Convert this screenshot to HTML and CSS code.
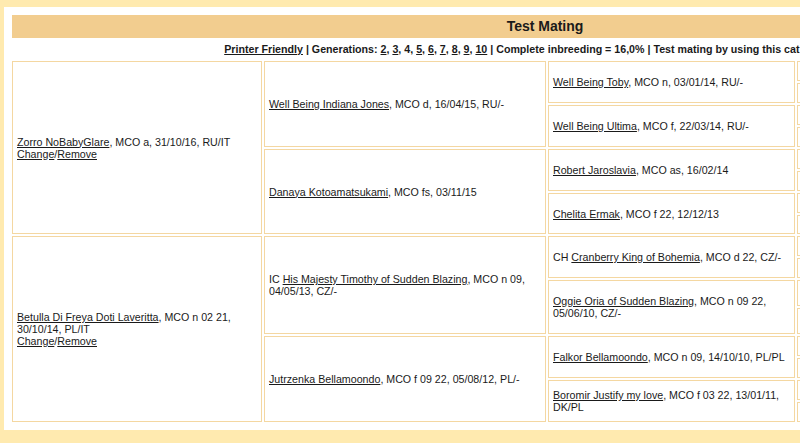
FILE: index.html
```html
<!DOCTYPE html>
<html lang="en">

<head>
  <meta charset="UTF-8" />
  <title>Test Mating</title>
  <link rel="stylesheet" href="styles.css">
</head>

<body>
  <div class="page">
    <h1 class="title-bar">Test Mating</h1>

    <div class="links">
      <a href="#">Printer Friendly</a> | Generations: <a href="#">2</a>, <a href="#">3</a>, 4, <a href="#">5</a>,
      <a href="#">6</a>, <a href="#">7</a>, <a href="#">8</a>, <a href="#">9</a>, <a href="#">10</a>
      | Complete inbreeding = 16,0% | Test mating by using this cat as the father
    </div>

    <table class="pedigree">
      <colgroup>
        <col class="gen1">
        <col class="gen2">
        <col class="gen3">
        <col class="gen4">
      </colgroup>
      <tr>
        <td rowspan="8"><a href="#">Zorro NoBabyGlare</a>, MCO a, 31/10/16, RU/IT<br><a href="#">Change</a>/<a href="#">Remove</a></td>
        <td rowspan="4"><a href="#">Well Being Indiana Jones</a>, MCO d, 16/04/15, RU/-</td>
        <td rowspan="2"><a href="#">Well Being Toby</a>, MCO n, 03/01/14, RU/-</td>
        <td class="g4"><div class="slot"></div></td>
      </tr>
      <tr><td class="g4"><div class="slot"></div></td></tr>
      <tr>
        <td rowspan="2"><a href="#">Well Being Ultima</a>, MCO f, 22/03/14, RU/-</td>
        <td class="g4"><div class="slot"></div></td>
      </tr>
      <tr><td class="g4"><div class="slot"></div></td></tr>
      <tr>
        <td rowspan="4"><a href="#">Danaya Kotoamatsukami</a>, MCO fs, 03/11/15</td>
        <td rowspan="2"><a href="#">Robert Jaroslavia</a>, MCO as, 16/02/14</td>
        <td class="g4"><div class="slot"></div></td>
      </tr>
      <tr><td class="g4"><div class="slot"></div></td></tr>
      <tr>
        <td rowspan="2"><a href="#">Chelita Ermak</a>, MCO f 22, 12/12/13</td>
        <td class="g4"><div class="slot"></div></td>
      </tr>
      <tr><td class="g4"><div class="slot short"></div></td></tr>

      <tr>
        <td rowspan="8"><a href="#">Betulla Di Freya Doti Laveritta</a>, MCO n 02 21, 30/10/14, PL/IT<br><a href="#">Change</a>/<a href="#">Remove</a></td>
        <td rowspan="4">IC <a href="#">His Majesty Timothy of Sudden Blazing</a>, MCO n 09, 04/05/13, CZ/-</td>
        <td rowspan="2">CH <a href="#">Cranberry King of Bohemia</a>, MCO d 22, CZ/-</td>
        <td class="g4"><div class="slot"></div></td>
      </tr>
      <tr><td class="g4"><div class="slot"></div></td></tr>
      <tr>
        <td rowspan="2"><a href="#">Oggie Oria of Sudden Blazing</a>, MCO n 09 22, 05/06/10, CZ/-</td>
        <td class="g4"><div class="slot tall"></div></td>
      </tr>
      <tr><td class="g4"><div class="slot tall"></div></td></tr>
      <tr>
        <td rowspan="4"><a href="#">Jutrzenka Bellamoondo</a>, MCO f 09 22, 05/08/12, PL/-</td>
        <td rowspan="2"><a href="#">Falkor Bellamoondo</a>, MCO n 09, 14/10/10, PL/PL</td>
        <td class="g4"><div class="slot"></div></td>
      </tr>
      <tr><td class="g4"><div class="slot"></div></td></tr>
      <tr>
        <td rowspan="2"><a href="#">Boromir Justify my love</a>, MCO f 03 22, 13/01/11, DK/PL</td>
        <td class="g4"><div class="slot"></div></td>
      </tr>
      <tr><td class="g4"><div class="slot"></div></td></tr>
    </table>
  </div>
</body>

</html>
```

FILE: styles.css
```css
:root {
  --page-bg: #ffeaaf;
  --bar: #f2cd8f;
  --line: #f4d7a1;
  --ink: #1a1a1a;
}

* {
  box-sizing: border-box;
}

html,
body {
  margin: 0;
  padding: 0;
  overflow: hidden;
}

body {
  background: var(--page-bg);
  color: var(--ink);
  font-family: Arial, 'Liberation Sans', sans-serif;
  font-size: 8pt;
  padding: 7px 0 0 4px;
}

a {
  color: var(--ink);
  text-decoration: underline;
}

.page {
  background: white;
  width: 1082px;
  padding: 6px;
}

.title-bar {
  margin: 2px;
  height: 23px;
  line-height: 23px;
  background: var(--bar);
  text-align: center;
  font-size: 14px;
  font-weight: bold;
}

.links {
  padding: 3px 0 4px;
  text-align: center;
  font-weight: bold;
  line-height: 12px;
  white-space: nowrap;
}

.pedigree {
  width: 100%;
  table-layout: fixed;
  border-collapse: separate;
  border-spacing: 2px;
}

.pedigree td {
  border: 1px solid var(--line);
  padding: 4px;
  vertical-align: middle;
  line-height: 12px;
}

.gen1 {
  width: 250px;
}

.gen2 {
  width: 282px;
}

.gen3 {
  width: 247px;
}

.pedigree td.g4 {
  padding: 0;
}

.slot {
  height: 18px;
}

.slot.short {
  height: 17px;
}

.slot.tall {
  height: 24px;
}
```
